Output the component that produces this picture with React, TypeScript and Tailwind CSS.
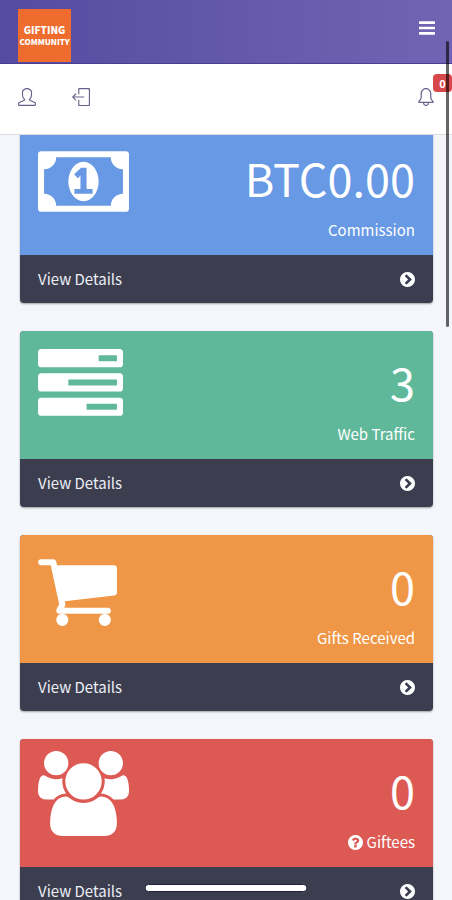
import type { ReactNode } from "react";
import { SlBell, SlLogout, SlUser } from "react-icons/sl";

interface GlyphProps {
  d: string;
  viewBox: string;
  className?: string;
}

function Glyph({ d, viewBox, className }: GlyphProps) {
  return (
    <svg viewBox={viewBox} fill="currentColor" className={className} aria-hidden="true">
      <path d={d} />
    </svg>
  );
}

const MONEY =
  "M704 1152h384v-96h-128v-448h-114l-148 137 77 80q42-37 55-57h2v288h-128v96zm512-256q0 70-21 142t-59.5 134-101.5 101-138 39-138-39-101.5-101-59.5-134-21-142 21-142 59.5-134 101.5-101 138-39 138 39 101.5 101 59.5 134 21 142zm512 256v-512q-106 0-181-75t-75-181h-1152q0 106-75 181t-181 75v512q106 0 181 75t75 181h1152q0-106 75-181t181-75zm128-832v1152q0 26-19 45t-45 19h-1792q-26 0-45-19t-19-45v-1152q0-26 19-45t45-19h1792q26 0 45 19t19 45z";
const TASKS =
  "M1024 1408h640v-128h-640v128zm-384-512h1024v-128h-1024v128zm640-512h384v-128h-384v128zm512 832v256q0 26-19 45t-45 19h-1664q-26 0-45-19t-19-45v-256q0-26 19-45t45-19h1664q26 0 45 19t19 45zm0-512v256q0 26-19 45t-45 19h-1664q-26 0-45-19t-19-45v-256q0-26 19-45t45-19h1664q26 0 45 19t19 45zm0-512v256q0 26-19 45t-45 19h-1664q-26 0-45-19t-19-45v-256q0-26 19-45t45-19h1664q26 0 45 19t19 45z";
const CART =
  "M704 1536q0 52-38 90t-90 38-90-38-38-90 38-90 90-38 90 38 38 90zm896 0q0 52-38 90t-90 38-90-38-38-90 38-90 90-38 90 38 38 90zm128-1088v512q0 24-16.5 42.5t-40.5 21.5l-1044 122q13 60 13 70 0 16-24 64h920q26 0 45 19t19 45-19 45-45 19h-1024q-26 0-45-19t-19-45q0-11 8-31.5t16-36 21.5-40 15.5-29.5l-177-823h-204q-26 0-45-19t-19-45 19-45 45-19h256q16 0 28.5 6.5t19.5 15.5 13 24.5 8 26 5.5 29.5 4.5 26h1201q26 0 45 19t19 45z";
const USERS =
  "M657 896q-162 5-265 128h-134q-82 0-138-40.5t-56-118.5q0-353 124-353 6 0 43.5 21t97.5 42.5 119 21.5q67 0 133-23-5 37-5 66 0 139 81 256zm1071 637q0 120-73 189.5t-194 69.5h-874q-121 0-194-69.5t-73-189.5q0-53 3.5-103.5t14-109 26.5-108.5 43-97.5 62-81 85.5-53.5 111.5-20q10 0 43 21.5t73 48 107 48 135 21.5 135-21.5 107-48 73-48 43-21.5q61 0 111.5 20t85.5 53.5 62 81 43 97.5 26.5 108.5 14 109 3.5 103.5zm-1024-1277q0 106-75 181t-181 75-181-75-75-181 75-181 181-75 181 75 75 181zm704 384q0 159-112.5 271.5t-271.5 112.5-271.5-112.5-112.5-271.5 112.5-271.5 271.5-112.5 271.5 112.5 112.5 271.5zm576 225q0 78-56 118.5t-138 40.5h-134q-103-123-265-128 81-117 81-256 0-29-5-66 66 23 133 23 59 0 119-21.5t97.5-42.5 43.5-21q124 0 124 353zm-128-609q0 106-75 181t-181 75-181-75-75-181 75-181 181-75 181 75 75 181z";
const CHEVRON_CIRCLE =
  "M845 1395l454-454q19-19 19-45t-19-45l-454-454q-19-19-45-19t-45 19l-102 102q-19 19-19 45t19 45l307 307-307 307q-19 19-19 45t19 45l102 102q19 19 45 19t45-19zm819-499q0 209-103 385.5t-279.5 279.5-385.5 103-385.5-103-279.5-279.5-103-385.5 103-385.5 279.5-279.5 385.5-103 385.5 103 279.5 279.5 103 385.5z";
const QUESTION_CIRCLE =
  "M1024 1376v-192q0-14-9-23t-23-9h-192q-14 0-23 9t-9 23v192q0 14 9 23t23 9h192q14 0 23-9t9-23zm256-672q0-88-55.5-163t-138.5-116-170-41q-243 0-371 213-15 24 8 42l132 100q7 6 19 6 16 0 25-12 53-68 86-92 34-24 86-24 48 0 85.5 26t37.5 59q0 38-20 61t-68 45q-63 28-115.5 86.5t-52.5 125.5v36q0 14 9 23t23 9h192q14 0 23-9t9-23q0-19 21.5-49.5t54.5-49.5q32-18 49-28.5t46-35 44.5-48 28-60.5 12.5-81zm384 192q0 209-103 385.5t-279.5 279.5-385.5 103-385.5-103-279.5-279.5-103-385.5 103-385.5 279.5-279.5 385.5-103 385.5 103 279.5 279.5 103 385.5z";
const BARS =
  "M1664 1344v128q0 26-19 45t-45 19h-1408q-26 0-45-19t-19-45v-128q0-26 19-45t45-19h1408q26 0 45 19t19 45zm0-512v128q0 26-19 45t-45 19h-1408q-26 0-45-19t-19-45v-128q0-26 19-45t45-19h1408q26 0 45 19t19 45zm0-512v128q0 26-19 45t-45 19h-1408q-26 0-45-19t-19-45v-128q0-26 19-45t45-19h1408q26 0 45 19t19 45z";

interface StatCardProps {
  color: string;
  icon: ReactNode;
  value: string;
  label: string;
  help?: boolean;
}

/** Coloured stat panel with a "View Details" footer link. */
function StatCard({ color, icon, value, label, help }: StatCardProps) {
  return (
    <section className="overflow-hidden rounded-sm bg-[#3c3e50] text-white shadow-[0_1px_2px_rgba(0,0,0,0.35)]">
      <div className={`flex h-32 justify-between px-[18px] pt-3 ${color}`}>
        {icon}
        <div className="flex flex-col items-end pt-[13px]">
          <div className="text-[45px] leading-[52px]">{value}</div>
          <div className="flex items-center gap-1 pt-[14px] text-[15px] leading-6">
            {help && <Glyph d={QUESTION_CIRCLE} viewBox="128 128 1536 1536" className="size-[15px]" />}
            {label}
          </div>
        </div>
      </div>
      <a href="#details" className="flex h-12 items-center justify-between px-[18px] text-[15px] text-[#eceef4]">
        View Details
        <Glyph d={CHEVRON_CIRCLE} viewBox="128 128 1536 1536" className="size-[15px] text-white" />
      </a>
    </section>
  );
}

export default function App() {
  return (
    <div className="relative h-screen overflow-hidden bg-[#f4f6fb] font-['Noto_Sans_CJK_SC','Open_Sans',sans-serif]">
      <header className="relative z-10">
        <div className="flex h-16 items-center justify-between border-b border-[#4a3d94] bg-linear-to-r from-[#564b9f] to-[#7264b4] pl-[18px] pr-[17px]">
          <a
            href="#home"
            className="mt-2 flex size-[53px] flex-col items-center justify-center bg-[#ee6d2e] font-black text-white"
          >
            <span className="text-[10px] leading-3">GIFTING</span>
            <span className="text-[8px] leading-3">COMMUNITY</span>
          </a>
          <button type="button" aria-label="Menu" className="text-white">
            <Glyph d={BARS} viewBox="128 128 1536 1536" className="-mt-2 size-4" />
          </button>
        </div>
        <nav className="flex h-[71px] items-center border-b border-[#dcdde2] bg-white pb-1 pl-[18px] pr-[17px] text-[#67628c]">
          <button type="button" aria-label="Profile">
            <SlUser className="size-[18px]" />
          </button>
          <button type="button" aria-label="Log out" className="ml-9">
            <SlLogout className="size-[18px]" />
          </button>
          <button type="button" aria-label="Notifications" className="relative ml-auto">
            <SlBell className="size-[18px]" />
            <span className="absolute -right-[17px] -top-[14px] flex h-[18px] w-[19px] items-center justify-center rounded-sm bg-[#d8474a] text-[11px] font-bold text-white">
              0
            </span>
          </button>
        </nav>
      </header>

      {/* first card is scrolled slightly under the nav */}
      <main className="-mt-2 flex flex-col gap-7 pl-5 pr-[19px]">
        <StatCard
          color="bg-[#6799e5]"
          icon={<Glyph d={MONEY} viewBox="-64 0 1920 1792" className="h-[85px] w-[91px]" />}
          value="BTC0.00"
          label="Commission"
        />
        <StatCard
          color="bg-[#60b89a]"
          icon={<Glyph d={TASKS} viewBox="0 0 1792 1792" className="h-[85px] w-[85px]" />}
          value="3"
          label="Web Traffic"
        />
        <StatCard
          color="bg-[#ef9746]"
          icon={<Glyph d={CART} viewBox="64 0 1664 1792" className="h-[85px] w-[79px]" />}
          value="0"
          label="Gifts Received"
        />
        <StatCard
          color="bg-[#dd5a54]"
          icon={<Glyph d={USERS} viewBox="64 0 1920 1792" className="h-[85px] w-[91px]" />}
          value="0"
          label="Giftees"
          help
        />
      </main>

      {/* scroll thumb and home indicator */}
      <div className="absolute right-[3px] top-[41px] z-20 h-[286px] w-[3px] rounded-full bg-black/60" />
      <div className="absolute bottom-2 left-1/2 z-20 h-2 w-[163px] -translate-x-1/2 rounded-full border border-[#20203a] bg-white" />
    </div>
  );
}
